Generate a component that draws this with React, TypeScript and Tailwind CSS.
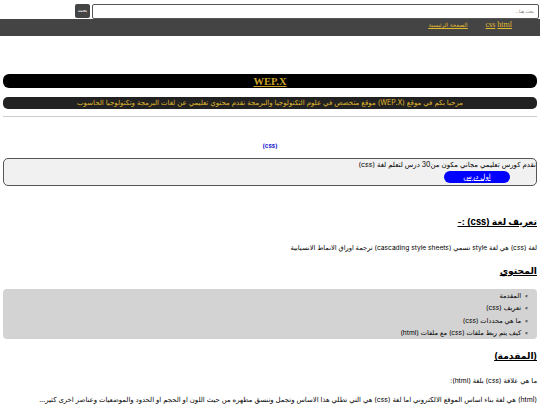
const SANS = 'font-["Inter","DejaVu_Sans",sans-serif]'

const TOC = ['المقدمة', 'تعريف (css)', 'ما هي محددات (css)', 'كيف يتم ربط ملفات (css) مع ملفات (html)']

export default function App() {
  return (
    <div dir="rtl" className={`w-[540px] h-[405px] overflow-hidden bg-white ${SANS}`}>
      {/* بحث */}
      <div className="h-[19px] pt-1 flex items-start pr-px gap-0.5">
        <input
          placeholder="بحث هنا..."
          className="w-[447px] h-[15px] border border-[#555] rounded-[2px] bg-white px-1 text-[4.5px] placeholder:text-[#777]"
        />
        <button className="w-[15px] h-[14px] bg-[#444] text-white text-[5px] rounded-[2px]">بحث</button>
      </div>

      {/* القائمة */}
      <nav className="h-[17px] bg-[#444] flex gap-[18px] pr-[28px] text-[8px] leading-[10px] text-[#e0b82c] underline font-['Liberation_Serif',serif] pt-px items-start">
        <span className="flex gap-[2px]" dir="ltr">
          <a>css</a>
          <a>html</a>
        </span>
        <a className={SANS + ' text-[5.7px]'}>الصفحة الرئيسية</a>
      </nav>

      <div className="px-[3px]">
        <h1 className="mt-[38px] h-[14px] bg-black rounded-[6px] text-center text-[#c9a227] text-[10.5px] leading-[15px] font-bold underline font-['Liberation_Serif',serif]">
          WEP.X
        </h1>
        <p className="mt-[9px] h-[12px] bg-[#222] rounded-[5px] text-center text-[#e0b82c] text-[7px] leading-[12px] whitespace-nowrap">
          مرحبا بكم في موقع (WEP.X) موقع متخصص في علوم التكنولوجيا والبرمجة نقدم محتوي تعليمي عن لغات البرمجة وتكنولوجيا الحاسوب
        </p>
        <hr className="mt-[7px] border-[#ccc]" />

        <p className="mt-[25px] text-center text-[6px] leading-[8px] font-bold text-[#2222cc]">(css)</p>

        <div className="mt-2 h-[28px] bg-[#f1f1f1] border-[1.5px] border-[#555] rounded-[5px] flex flex-col">
          <p className="text-[7px] leading-[12px] text-black whitespace-nowrap">
            نقدم كورس تعليمي مجاني مكون من30 درس لتعلم لغة (css)
          </p>
          <div className="flex justify-start pr-[26px]">
            <a className="w-[66px] h-[12px] bg-[#0000ff] rounded-[6px] text-white underline text-center text-[7px] leading-[12px]">
              اول درس
            </a>
          </div>
        </div>

        <h2 className="mt-[29px] text-[9.2px] leading-[13px] font-bold underline text-black">تعريف لغة (css) :-</h2>
        <p className="mt-[16px] text-[6.65px] leading-[8px] text-black whitespace-nowrap">
          لغة (css) هي لغة style تسمي (cascading style sheets) ترجمة اوراق الانماط الانسيابية
        </p>

        <h2 className="mt-[12px] text-[9.2px] leading-[13px] font-bold underline text-black">المحتوي</h2>

        <ul className="mt-[12px] h-[50px] bg-[#d3d3d3] rounded-[4px] pr-[9px] pt-[1px] text-[6.65px] leading-[12.4px] text-black">
          {TOC.map(item => (
            <li key={item} className="flex items-center gap-[4px] whitespace-nowrap">
              <span className="text-[5px]">»</span>
              {item}
            </li>
          ))}
        </ul>

        <h2 className="mt-[10px] text-[9.2px] leading-[13px] font-bold underline text-black">(المقدمة)</h2>
        <p className="mt-[15px] text-[6.75px] leading-[8px] text-black whitespace-nowrap">ما هي علاقة (css) بلغة (html):</p>
        <p className="mt-[11px] text-[6.9px] leading-[8px] text-black whitespace-nowrap">
          (html) هي لغة بناء اساس الموقع الالكتروني اما لغة (css) هي التي تطلي هذا الاساس وتجمل وتنسق مظهره من حيث اللون او الحجم او الحدود والموضعيات وعناصر اخرى كثير...
        </p>
      </div>
    </div>
  )
}
